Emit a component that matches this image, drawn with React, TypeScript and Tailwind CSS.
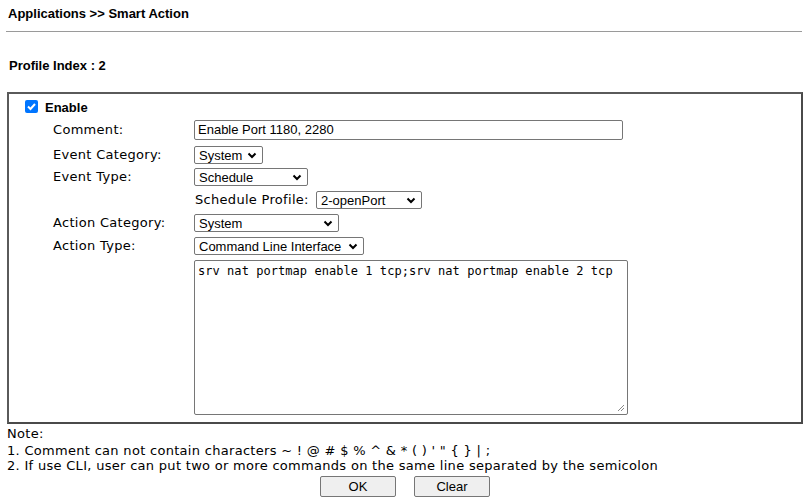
import type { ReactNode } from "react";

const ARIAL = "font-['Liberation_Sans',Arial,sans-serif]";
const VERDANA = "font-['DejaVu_Sans',Verdana,sans-serif] tracking-[0.3px]";

function Chevron() {
  return (
    <svg width="10" height="7" viewBox="0 0 10 7" className="shrink-0">
      <polyline points="1.5,1.5 5,5 8.5,1.5" fill="none" stroke="#000" strokeWidth="2" />
    </svg>
  );
}

function Select({ value, width }: { value: string; width: string }) {
  return (
    <div
      className={`${width} h-[18px] flex items-center justify-between border border-[#767676] rounded-[2px] pl-[4px] pr-[5px] text-[13px] leading-none text-black ${ARIAL}`}
    >
      <span>{value}</span>
      <Chevron />
    </div>
  );
}

function Row({ label, children, className = "" }: { label: string; children: ReactNode; className?: string }) {
  return (
    <div className={`flex items-center ${className}`}>
      <div className={`w-[141px] text-[13px] text-black ${VERDANA}`}>{label}</div>
      {children}
    </div>
  );
}

export default function App() {
  return (
    <div className="w-[812px] h-[504px] bg-white overflow-hidden text-black">
      <div className={`pl-2 pt-[6px] h-[22px] leading-[16px] text-[13px] font-bold ${ARIAL}`}>
        Applications &gt;&gt; Smart Action
      </div>
      <div className="ml-[6px] mt-[9px] mr-[10px] h-px bg-[#9a9a9a]" />
      <div className={`pl-[9px] mt-[26px] h-[16px] leading-[16px] text-[13px] font-bold ${ARIAL}`}>
        Profile Index : 2
      </div>

      <div className="ml-[7px] mt-[18px] w-[796px] h-[332px] border-2 border-[#4a4a4a] border-t-[#5a5a5a] border-l-[#5a5a5a]">
        <div className="flex items-center pl-[16px] h-[25px]">
          <div className="w-[13px] h-[13px] rounded-[2px] bg-[#0075ff] flex items-center justify-center">
            <svg width="11" height="11" viewBox="0 0 11 11">
              <polyline points="2,5.5 4.5,8 9,3" fill="none" stroke="#fff" strokeWidth="2" />
            </svg>
          </div>
          <span className={`ml-[7px] mt-[2px] text-[13px] font-bold ${ARIAL}`}>Enable</span>
        </div>

        <div className="pl-[44px]">
          <Row label="Comment:" className="mt-[1px] h-[20px]">
            <div className={`w-[429px] h-[20px] border border-[#767676] rounded-[2px] px-[3px] flex items-center text-[13px] ${ARIAL}`}>
              Enable Port 1180, 2280
            </div>
          </Row>
          <Row label="Event Category:" className="mt-[6px] h-[18px]">
            <Select value="System" width="w-[69px]" />
          </Row>
          <Row label="Event Type:" className="mt-[4px] h-[18px]">
            <Select value="Schedule" width="w-[114px]" />
          </Row>
          <div className="mt-[5px] h-[18px] flex items-center pl-[142px]">
            <span className={`w-[121px] text-[13px] ${VERDANA}`}>Schedule Profile:</span>
            <Select value="2-openPort" width="w-[106px]" />
          </div>
          <Row label="Action Category:" className="mt-[5px] h-[18px]">
            <Select value="System" width="w-[145px]" />
          </Row>
          <Row label="Action Type:" className="mt-[5px] h-[18px]">
            <Select value="Command Line Interface" width="w-[170px]" />
          </Row>
          <div className="mt-[5px] pl-[141px]">
            <div className="relative w-[434px] h-[155px] border border-[#767676] rounded-[2px] px-[3px] pt-[2px] text-[12px] leading-[16px] tracking-[0.05px] font-['DejaVu_Sans_Mono',monospace]">
              srv nat portmap enable 1 tcp;srv nat portmap enable 2 tcp
              <svg width="8" height="8" viewBox="0 0 8 8" className="absolute right-[2px] bottom-[2px]">
                <line x1="1" y1="7" x2="7" y2="1" stroke="#888" strokeWidth="1" />
                <line x1="4" y1="7" x2="7" y2="4" stroke="#888" strokeWidth="1" />
              </svg>
            </div>
          </div>
        </div>
      </div>

      <div className={`pl-[7px] text-[13px] leading-[15px] ${VERDANA}`}>
        <div className="mt-[2px]">Note:</div>
        <div className="mt-[2px]">1. Comment can not contain characters ~ ! @ # $ % ^ &amp; * ( ) ' " {"{"} {"}"} | ;</div>
        <div>2. If use CLI, user can put two or more commands on the same line separated by the semicolon</div>
      </div>

      <div className="flex justify-center gap-[18px] mt-[3px] pr-[2px]">
        <button className={`w-[76px] h-[21px] bg-[#efefef] border border-[#767676] rounded-[2px] text-[13px] ${ARIAL}`}>OK</button>
        <button className={`w-[76px] h-[21px] bg-[#efefef] border border-[#767676] rounded-[2px] text-[13px] ${ARIAL}`}>Clear</button>
      </div>
    </div>
  );
}
